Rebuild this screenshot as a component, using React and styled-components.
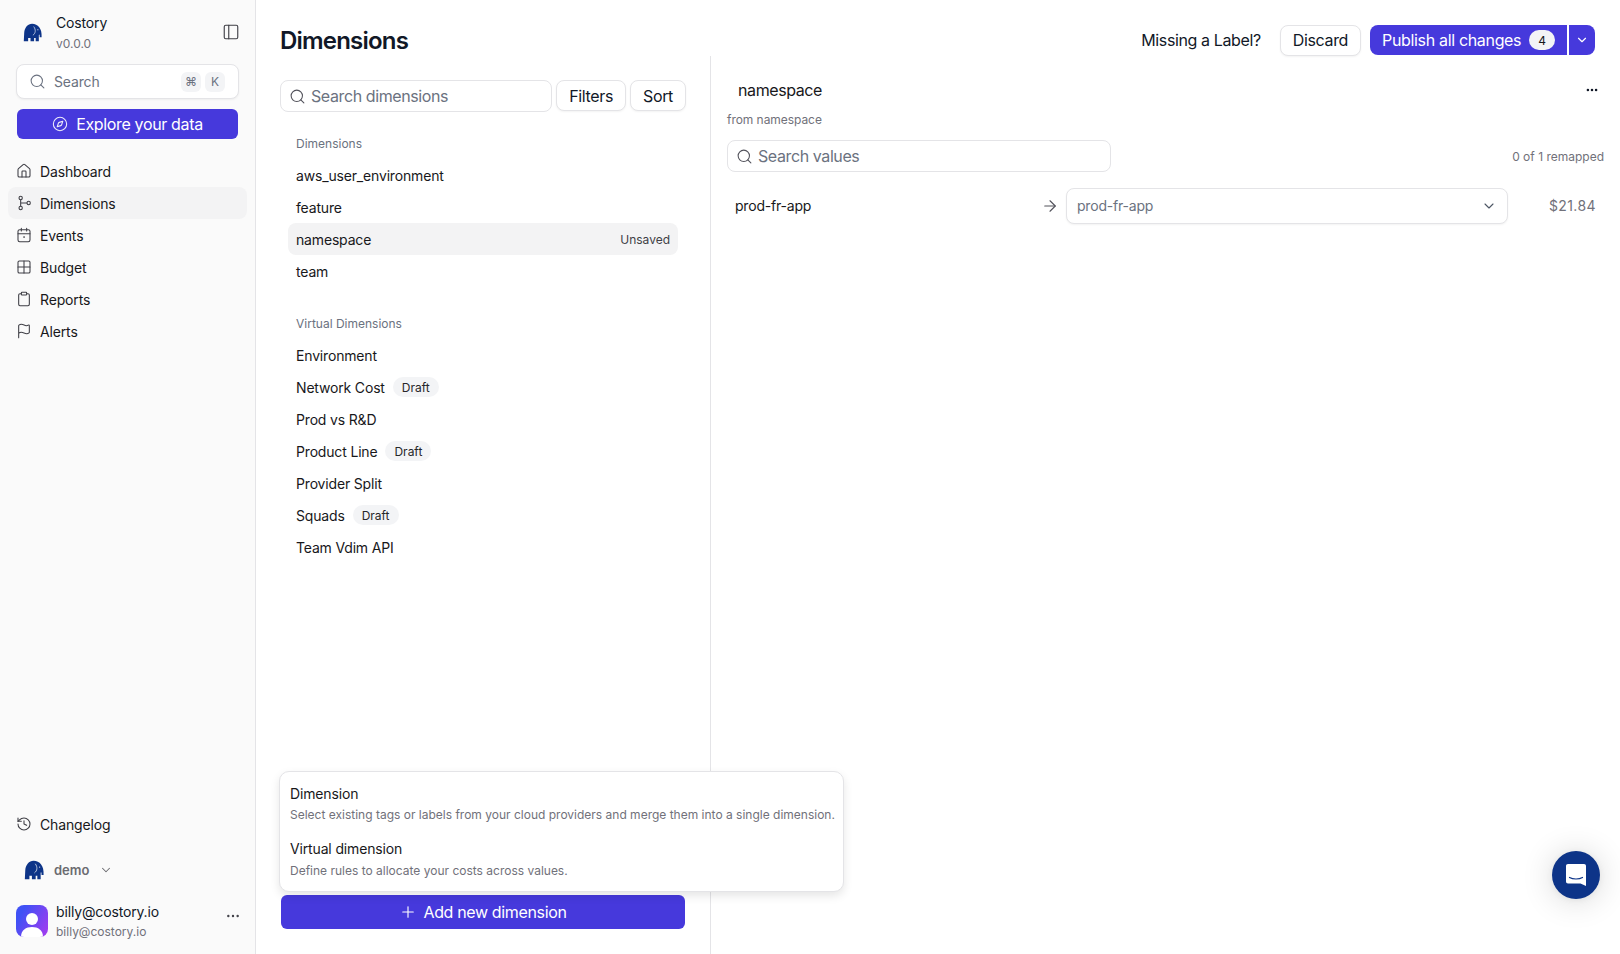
import styled, { createGlobalStyle } from "styled-components"
import {
  ArrowRight, ChevronDown, Clipboard, Compass, Ellipsis, Flag, Grid2x2,
  History, House, PanelLeft, Plus, Search,
} from "lucide-react"

const dimensions = [
  { name: "aws_user_environment" },
  { name: "feature" },
  { name: "namespace", active: true, status: "Unsaved" },
  { name: "team" },
]

const virtualDimensions = [
  { name: "Environment" },
  { name: "Network Cost", draft: true },
  { name: "Prod vs R&D" },
  { name: "Product Line", draft: true },
  { name: "Provider Split" },
  { name: "Squads", draft: true },
  { name: "Team Vdim API" },
]

function BranchIcon({ size, strokeWidth }) {
  return (
    <svg width={size} height={size} viewBox="0 0 24 24" fill="none" stroke="currentColor" strokeWidth={strokeWidth}>
      <circle cx="7" cy="4.500" r="2.500" />
      <circle cx="7" cy="19.500" r="2.500" />
      <circle cx="19" cy="12" r="2.500" />
      <path d="M7 7V17M7 12H16.500" />
    </svg>
  )
}

function EventIcon({ size, strokeWidth }) {
  return (
    <svg width={size} height={size} viewBox="0 0 24 24" fill="none" stroke="currentColor" strokeWidth={strokeWidth} strokeLinecap="round">
      <rect x="3" y="4" width="18" height="18" rx="2.500" />
      <path d="M8 2V6M16 2V6M3 10H21" />
      <rect x="11" y="14" width="2.200" height="2.200" fill="currentColor" stroke="none" />
    </svg>
  )
}

const navItems = [
  { label: "Dashboard", icon: House },
  { label: "Dimensions", icon: BranchIcon, active: true },
  { label: "Events", icon: EventIcon },
  { label: "Budget", icon: Grid2x2 },
  { label: "Reports", icon: Clipboard },
  { label: "Alerts", icon: Flag },
]

function Elephant({ size }) {
  return (
    <svg width={size} height={size} viewBox="0 0 24 24">
      <path
        fill="#0d3488"
        d="M11.500 1C6 1 2 6 1.500 12.500L1 23H6.500V19H9.500V23H14V19H16V23H20V15.500C20 14.500 20.800 14.300 21 15.500V18H23.500C23.700 12 22.800 8.500 20.500 5.500C18.500 2.500 15 1 11.500 1Z"
      />
      <path fill="none" stroke="#fff" strokeWidth="0.800" d="M13.500 4.500C16.500 8.500 16 13 12.500 15.500" />
      <circle cx="18.800" cy="8.500" r="0.700" fill="#fff" />
    </svg>
  )
}

export default function App() {
  return (
    <>
      <GlobalStyle />
      <Page>
        <Sidebar>
          <Brand>
            <Elephant size={19} />
            <BrandText>
              <strong>Costory</strong>
              <small>v0.0.0</small>
            </BrandText>
            <PanelLeft size={18} strokeWidth={1.5} color="#3f3f46" />
          </Brand>

          <SideSearch>
            <Search size={17} strokeWidth={1.5} color="#6b7280" />
            <span>Search</span>
            <Kbd>⌘</Kbd>
            <Kbd>K</Kbd>
          </SideSearch>

          <ExploreButton>
            <Compass size={16} strokeWidth={1.6} />
            Explore your data
          </ExploreButton>

          <Nav>
            {navItems.map(item => (
              <NavItem key={item.label} $active={item.active}>
                <item.icon size={16} strokeWidth={1.6} />
                {item.label}
              </NavItem>
            ))}
          </Nav>

          <SideFooter>
            <NavItem as="div">
              <History size={16} strokeWidth={1.6} />
              Changelog
            </NavItem>
            <OrgRow>
              <Elephant size={20} />
              <span>demo</span>
              <ChevronDown size={14} strokeWidth={1.8} />
            </OrgRow>
            <UserRow>
              <Avatar>
                <svg width="32" height="32" viewBox="0 0 32 32">
                  <circle cx="16" cy="14" r="6" fill="#fff" />
                  <path fill="#fff" d="M5 32C5 25 10 22 16 22S27 25 27 32Z" />
                </svg>
              </Avatar>
              <UserText>
                <strong>billy@costory.io</strong>
                <small>billy@costory.io</small>
              </UserText>
              <Ellipsis size={16} strokeWidth={1.6} color="#3f3f46" />
            </UserRow>
          </SideFooter>
        </Sidebar>

        <Main>
          <TopBar>
            <Title>Dimensions</Title>
            <TopActions>
              <MissingLabel>Missing a Label?</MissingLabel>
              <OutlineButton>Discard</OutlineButton>
              <PublishGroup>
                <PublishButton>
                  Publish all changes
                  <Count>4</Count>
                </PublishButton>
                <CaretButton>
                  <ChevronDown size={14} strokeWidth={2} />
                </CaretButton>
              </PublishGroup>
            </TopActions>
          </TopBar>

          <Columns>
            <ListColumn>
              <FilterRow>
                <SearchInput $grow>
                  <Search size={17} strokeWidth={1.5} />
                  Search dimensions
                </SearchInput>
                <OutlineButton>Filters</OutlineButton>
                <OutlineButton>Sort</OutlineButton>
              </FilterRow>

              <DimensionList>
                <GroupLabel>Dimensions</GroupLabel>
                {dimensions.map(dim => (
                  <DimensionRow key={dim.name} $active={dim.active}>
                    {dim.name}
                    {dim.status && <Status>{dim.status}</Status>}
                  </DimensionRow>
                ))}
                <GroupLabel $spaced>Virtual Dimensions</GroupLabel>
                {virtualDimensions.map(dim => (
                  <DimensionRow key={dim.name}>
                    {dim.name}
                    {dim.draft && <Draft>Draft</Draft>}
                  </DimensionRow>
                ))}
              </DimensionList>

              <AddMenu>
                <AddOption>
                  <h4>Dimension</h4>
                  <p>Select existing tags or labels from your cloud providers and merge them into a single dimension.</p>
                </AddOption>
                <AddOption>
                  <h4>Virtual dimension</h4>
                  <p>Define rules to allocate your costs across values.</p>
                </AddOption>
              </AddMenu>

              <AddButton>
                <Plus size={18} strokeWidth={1.5} />
                Add new dimension
              </AddButton>
            </ListColumn>

            <Detail>
              <DetailHead>
                <span>namespace</span>
                <Ellipsis size={14} strokeWidth={2.4} color="#111827" />
              </DetailHead>
              <FromText>from namespace</FromText>
              <SearchBar>
                <SearchInput $width="384px">
                  <Search size={17} strokeWidth={1.5} />
                  Search values
                </SearchInput>
                <Remapped>0 of 1 remapped</Remapped>
              </SearchBar>
              <ValueRow>
                <ValueName>prod-fr-app</ValueName>
                <ArrowRight size={18} strokeWidth={1.5} color="#52525b" />
                <ValueSelect>
                  <span>prod-fr-app</span>
                  <ChevronDown size={16} strokeWidth={1.6} color="#4b5563" />
                </ValueSelect>
                <Price>$21.84</Price>
              </ValueRow>
            </Detail>
          </Columns>
        </Main>

        <ChatBubble>
          <svg width="22" height="24" viewBox="0 0 22 24">
            <path
              fill="#fff"
              d="M3 1H19C20.200 1 21 1.800 21 3V23L15.500 20.500H3C1.800 20.500 1 19.700 1 18.500V3C1 1.800 1.800 1 3 1Z"
            />
            <path fill="none" stroke="#0d3488" strokeWidth="1.200" strokeLinecap="round" d="M4.500 14.500C8 16.500 14 16.500 17.500 14.500" />
          </svg>
        </ChatBubble>
      </Page>
    </>
  )
}

const GlobalStyle = createGlobalStyle`
  * { box-sizing: border-box; }
  body {
    margin: 0;
    background: #fff;
    color: #111827;
    font-family: Inter, "Liberation Sans", sans-serif;
  }
`

const Page = styled.div`
  display: flex;
  height: 954px;
  width: 1620px;
  overflow: hidden;
  position: relative;
`

const Sidebar = styled.aside`
  width: 256px;
  flex-shrink: 0;
  display: flex;
  flex-direction: column;
  background: #fafafa;
  border-right: 1px solid #e4e4e7;
`

const Brand = styled.div`
  height: 64px;
  display: flex;
  align-items: center;
  padding: 0 15px 0 23px;
  gap: 14px;
`

const BrandText = styled.div`
  flex: 1;
  display: flex;
  flex-direction: column;
  gap: 5px;
  margin-top: 1px;
  strong { font-size: 14px; font-weight: 400; line-height: 17px; letter-spacing: -0.15px; }
  small { font-size: 12px; line-height: 16px; color: #71717a; }
`

const SideSearch = styled.div`
  margin: 0 16px;
  height: 35px;
  display: flex;
  align-items: center;
  gap: 8px;
  padding: 0 13px 0 12px;
  background: #fff;
  border: 1px solid #e4e4e7;
  border-radius: 8px;
  box-shadow: 0 1px 2px rgba(0, 0, 0, 0.05);
  font-size: 14px;
  letter-spacing: -0.15px;
  color: #6b7280;
  span { flex: 1; }
`

const Kbd = styled.kbd`
  width: 20px;
  height: 20px;
  display: flex;
  align-items: center;
  justify-content: center;
  background: #f3f4f6;
  border-radius: 6px;
  font-family: Inter, "DejaVu Sans", sans-serif;
  font-size: 12px;
  color: #6b7280;
  & + & { margin-left: -4px; }
`

const ExploreButton = styled.button`
  margin: 10px 17px 0;
  height: 30px;
  display: flex;
  align-items: center;
  justify-content: center;
  gap: 8px;
  border: 0;
  border-radius: 6px;
  background: #4639dc;
  color: #fff;
  font: 400 16px Inter, sans-serif;
  letter-spacing: -0.35px;
  svg { opacity: 0.9; }
`

const Nav = styled.nav`
  display: flex;
  flex-direction: column;
  margin-top: 16px;
  padding: 0 8px;
`

const NavItem = styled.a`
  height: 32px;
  display: flex;
  align-items: center;
  gap: 8px;
  padding: 0 8px;
  border-radius: 8px;
  font-size: 14px;
  letter-spacing: -0.15px;
  color: #18181b;
  background: ${p => (p.$active ? "#f3f3f4" : "transparent")};
  svg { color: #3f3f46; flex-shrink: 0; }
`

const SideFooter = styled.div`
  margin-top: auto;
  padding: 0 8px 17px;
  display: flex;
  flex-direction: column;
`

const OrgRow = styled.div`
  height: 32px;
  margin-top: 14px;
  display: flex;
  align-items: center;
  padding-left: 16px;
  gap: 10px;
  font-size: 13px;
  font-weight: 600;
  color: #6b6b70;
`

const UserRow = styled.div`
  height: 34px;
  margin-top: 17px;
  padding: 0 8px;
  display: flex;
  align-items: flex-start;
  gap: 8px;
  > svg { margin: 5px -2px 0 0; }
`

const Avatar = styled.div`
  width: 32px;
  height: 32px;
  margin-top: 2px;
  border-radius: 8px;
  overflow: hidden;
  background: linear-gradient(120deg, #3f51f5 20%, #9b3df0 90%);
  svg { display: block; }
`

const UserText = styled.div`
  flex: 1;
  display: flex;
  flex-direction: column;
  gap: 4px;
  strong { font-size: 14px; font-weight: 400; line-height: 17px; letter-spacing: -0.15px; }
  small { font-size: 12px; line-height: 15px; color: #71717a; }
`

const Main = styled.main`
  flex: 1;
  min-width: 0;
  display: flex;
  flex-direction: column;
`

const TopBar = styled.header`
  height: 56px;
  padding: 24px 25px 0 24px;
  display: flex;
  align-items: center;
  justify-content: space-between;
`

const Title = styled.h1`
  margin: 0;
  padding-top: 2px;
  font-size: 24px;
  line-height: 32px;
  font-weight: 600;
  letter-spacing: -0.8px;
  color: #111827;
`

const TopActions = styled.div`
  display: flex;
  align-items: center;
`

const MissingLabel = styled.span`
  font-size: 16px;
  letter-spacing: -0.38px;
  margin-right: 19px;
`

const OutlineButton = styled.button`
  height: 31px;
  padding: 0 12px;
  background: #fff;
  border: 1px solid #e4e4e7;
  border-radius: 8px;
  box-shadow: 0 1px 2px rgba(0, 0, 0, 0.05);
  font: 400 16px Inter, sans-serif;
  letter-spacing: -0.35px;
  color: #111827;
`

const PublishGroup = styled.div`
  display: flex;
  gap: 2px;
  margin-left: 9px;
  height: 30px;
`

const PublishButton = styled.button`
  width: 197px;
  display: flex;
  align-items: center;
  justify-content: space-between;
  padding: 0 12px;
  border: 0;
  border-radius: 8px 0 0 8px;
  background: #4639dc;
  color: #fff;
  font: 400 16px Inter, sans-serif;
  letter-spacing: -0.33px;
`

const Count = styled.span`
  width: 26px;
  height: 20px;
  display: flex;
  align-items: center;
  justify-content: center;
  background: #f3f4f6;
  border-radius: 999px;
  color: #18181b;
  font-size: 12px;
`

const CaretButton = styled.button`
  width: 26px;
  display: flex;
  align-items: center;
  justify-content: center;
  padding: 0;
  border: 0;
  border-radius: 0 8px 8px 0;
  background: #4639dc;
  color: #fff;
`

const Columns = styled.div`
  flex: 1;
  display: flex;
  min-height: 0;
`

const ListColumn = styled.section`
  width: 455px;
  flex-shrink: 0;
  position: relative;
  display: flex;
  flex-direction: column;
  padding: 24px 24px 25px;
  border-right: 1px solid #e4e4e7;
`

const FilterRow = styled.div`
  display: flex;
  gap: 4px;
`

const SearchInput = styled.div`
  flex: ${p => (p.$grow ? 1 : "none")};
  width: ${p => p.$width || "auto"};
  height: 32px;
  display: flex;
  align-items: center;
  gap: 5px;
  padding: 0 8px;
  background: #fff;
  border: 1px solid #e4e4e7;
  border-radius: 8px;
  font-size: 16px;
  letter-spacing: -0.4px;
  color: #6b7280;
  svg { color: #52525b; flex-shrink: 0; }
`

const DimensionList = styled.div`
  display: flex;
  flex-direction: column;
  margin-top: 15px;
  padding: 0 8px;
`

const GroupLabel = styled.div`
  height: 32px;
  display: flex;
  align-items: center;
  padding: 0 8px;
  margin-top: ${p => (p.$spaced ? "20px" : "0")};
  font-size: 12px;
  color: #6b7280;
`

const DimensionRow = styled.div`
  height: 32px;
  display: flex;
  align-items: center;
  gap: 8px;
  padding: 0 8px;
  border-radius: 8px;
  font-size: 14px;
  letter-spacing: -0.17px;
  color: #18181b;
  background: ${p => (p.$active ? "#f3f3f4" : "transparent")};
`

const Status = styled.span`
  margin-left: auto;
  font-size: 12px;
  letter-spacing: 0;
  color: #3f3f46;
`

const Draft = styled.span`
  height: 20px;
  display: flex;
  align-items: center;
  padding: 0 9px;
  background: #f3f4f6;
  border-radius: 999px;
  font-size: 12px;
  letter-spacing: 0;
  color: #27272a;
`

const AddMenu = styled.div`
  position: absolute;
  left: 23px;
  bottom: 62px;
  width: 565px;
  padding: 12px 10px;
  background: #fff;
  border: 1px solid #e4e4e7;
  border-radius: 10px;
  box-shadow: 0 4px 10px rgba(0, 0, 0, 0.1);
  z-index: 2;
`

const AddOption = styled.div`
  & + & { margin-top: 16px; }
  h4 { margin: 0; font-size: 14px; line-height: 20px; font-weight: 400; letter-spacing: -0.15px; color: #18181b; }
  p { margin: 3px 0 0; font-size: 12px; line-height: 16px; color: #71717a; white-space: nowrap; }
  & + & p { margin-top: 4px; }
`

const AddButton = styled.button`
  margin: auto 1px 0;
  height: 34px;
  display: flex;
  align-items: center;
  justify-content: center;
  gap: 6px;
  border: 0;
  border-radius: 6px;
  background: #4639dc;
  color: #fff;
  font: 400 16px Inter, sans-serif;
  letter-spacing: -0.35px;
`

const Detail = styled.section`
  flex: 1;
  min-width: 0;
  padding: 18px 16px 0;
`

const DetailHead = styled.div`
  height: 32px;
  display: flex;
  align-items: center;
  justify-content: space-between;
  padding: 0 5px 0 11px;
  font-size: 16px;
  letter-spacing: -0.4px;
  color: #18181b;
`

const FromText = styled.div`
  margin-top: 6px;
  font-size: 12px;
  line-height: 16px;
  letter-spacing: -0.05px;
  color: #71717a;
`

const SearchBar = styled.div`
  margin-top: 12px;
  display: flex;
  align-items: center;
  justify-content: space-between;
`

const Remapped = styled.span`
  font-size: 12px;
  color: #71717a;
`

const ValueRow = styled.div`
  margin-top: 16px;
  padding: 0 8px;
  display: flex;
  align-items: center;
`

const ValueName = styled.span`
  flex: 1;
  padding-bottom: 2px;
  font-size: 14px;
  letter-spacing: -0.2px;
  color: #18181b;
`

const ValueSelect = styled.div`
  width: 442px;
  height: 36px;
  margin-left: 7px;
  display: flex;
  align-items: center;
  justify-content: space-between;
  padding: 0 10px;
  background: #fff;
  border: 1px solid #e4e4e7;
  border-radius: 8px;
  box-shadow: 0 1px 2px rgba(0, 0, 0, 0.05);
  font-size: 14px;
  letter-spacing: -0.2px;
  color: #6b7280;
  span { padding-bottom: 2px; }
`

const Price = styled.span`
  width: 88px;
  padding-bottom: 2px;
  text-align: right;
  font-size: 14px;
  letter-spacing: 0.4px;
  color: #71717a;
`

const ChatBubble = styled.div`
  position: absolute;
  right: 20px;
  bottom: 55px;
  width: 48px;
  height: 48px;
  display: flex;
  align-items: center;
  justify-content: center;
  border-radius: 50%;
  background: #0d3488;
  box-shadow: 0 1px 6px rgba(0, 0, 0, 0.06), 0 2px 32px rgba(0, 0, 0, 0.16);
`
